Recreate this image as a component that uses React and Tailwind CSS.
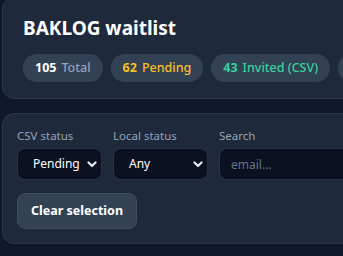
function Chevron() {
  return (
    <svg width="10" height="7" viewBox="0 0 10 7" fill="none" className="shrink-0">
      <path d="M1.5 1.5 L5 5 L8.5 1.5" stroke="#e2e8f0" strokeWidth="2.2" strokeLinecap="round" strokeLinejoin="round" />
    </svg>
  );
}

function Pill({ count, label, countClass, labelClass }) {
  return (
    <div className="flex h-7 shrink-0 items-center gap-[5px] rounded-full bg-[#334155] px-3 text-[12.5px] leading-none">
      <span className={`font-bold ${countClass}`}>{count}</span>
      <span className={`font-medium ${labelClass}`}>{label}</span>
    </div>
  );
}

function FakeSelect({ value, width }) {
  return (
    <div
      className={`flex h-8 items-center justify-between rounded-lg border border-[#273246] bg-[#0b1120] pl-[15px] pr-[4px] text-[12px] text-white ${width}`}
    >
      <span>{value}</span>
      <Chevron />
    </div>
  );
}

export default function App() {
  return (
    <div className="h-screen overflow-hidden bg-[#0f172a] pl-[2px] font-['Noto_Sans',sans-serif]">
      <div className="-mt-[3px] flex w-[420px] flex-col gap-[14px]">
        <div className="rounded-xl border border-[#2c374b] bg-[#1e293b] px-5 pb-4 pt-4">
          <h1 className="text-[19px] font-bold leading-7 text-white">BAKLOG waitlist</h1>
          <div className="mt-[12px] flex gap-2">
            <Pill count="105" label="Total" countClass="text-white" labelClass="text-[#94a3b8]" />
            <Pill count="62" label="Pending" countClass="text-[#fbbf24]" labelClass="text-[#fbbf24]" />
            <Pill count="43" label="Invited (CSV)" countClass="text-[#34d399]" labelClass="text-[#34d399]" />
            <Pill count="0" label="Invited" countClass="text-white" labelClass="text-[#94a3b8]" />
          </div>
        </div>

        <div className="rounded-xl border border-[#2c374b] bg-[#1e293b] p-[14px]">
          <div className="flex gap-[11px]">
            <div className="flex flex-col gap-1">
              <label className="text-[11.5px] leading-4 text-[#94a3b8]">CSV status</label>
              <FakeSelect value="Pending" width="w-[85px]" />
            </div>
            <div className="flex flex-col gap-1">
              <label className="text-[11.5px] leading-4 text-[#94a3b8]">Local status</label>
              <FakeSelect value="Any" width="w-[95px]" />
            </div>
            <div className="flex flex-col gap-1">
              <label className="text-[11.5px] leading-4 text-[#94a3b8]">Search</label>
              <input
                placeholder="email..."
                className="h-8 w-[200px] rounded-lg border border-[#273246] bg-[#0b1120] px-[11px] text-[12px] text-white outline-none placeholder:text-[#64748b]"
              />
            </div>
          </div>
          <button className="mt-[13px] h-9 rounded-lg border border-[#3f4c61] bg-[#334155] px-[13px] text-[12.5px] font-bold text-white">
            Clear selection
          </button>
        </div>
      </div>
    </div>
  );
}
